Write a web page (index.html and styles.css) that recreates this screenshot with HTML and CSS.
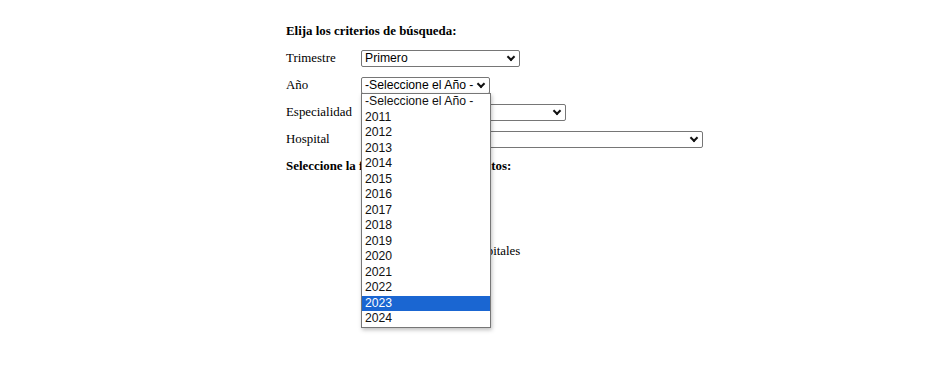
FILE: index.html
```html
<!DOCTYPE html>
<html lang="es">
<head>
  <meta charset="UTF-8" />
  <title>Consulta de datos</title>
  <link rel="stylesheet" href="styles.css">
</head>
<body>

  <div class="contenido">
    <form class="criterios">
      <div class="fila titulo">Elija los criterios de búsqueda:</div>

      <div class="fila">
        <label class="etiqueta">Trimestre</label>
        <span class="selector">
          <select class="sel-trimestre">
            <option>Primero</option>
          </select>
        </span>
      </div>

      <div class="fila">
        <label class="etiqueta">Año</label>
        <span class="selector">
          <select class="sel-anio">
            <option>-Seleccione el Año -</option>
          </select>
        </span>
      </div>

      <div class="fila">
        <label class="etiqueta">Especialidad</label>
        <span class="selector">
          <select class="sel-especialidad">
            <option></option>
          </select>
        </span>
      </div>

      <div class="fila">
        <label class="etiqueta">Hospital</label>
        <span class="selector">
          <select class="sel-hospital">
            <option></option>
          </select>
        </span>
      </div>

      <div class="fila titulo">Seleccione la forma de mostrar los datos:</div>

      <div class="opciones">
        <label class="opcion"><input type="radio" name="forma" checked /> Por Trimestre</label>
        <label class="opcion"><input type="radio" name="forma" /> Por Especialidad</label>
        <label class="opcion"><input type="radio" name="forma" /> Por Hospital</label>
        <label class="opcion"><input type="radio" name="forma" /> Comparativo de Hospitales</label>
      </div>
    </form>

    <!-- Lista desplegada del select de año -->
    <ul class="desplegable">
      <li>-Seleccione el Año -</li>
      <li>2011</li>
      <li>2012</li>
      <li>2013</li>
      <li>2014</li>
      <li>2015</li>
      <li>2016</li>
      <li>2017</li>
      <li>2018</li>
      <li>2019</li>
      <li>2020</li>
      <li>2021</li>
      <li>2022</li>
      <li class="activo">2023</li>
      <li>2024</li>
    </ul>
  </div>

</body>
</html>
```

FILE: styles.css
```css
html, body {
  height: 100%;
}

body {
  margin: 0;
  background: #fff;
  font-family: "Liberation Serif", "Times New Roman", serif;
  font-size: 12.9px;
  color: #000;
}

.contenido {
  position: relative;
  min-height: 100%;
  box-sizing: border-box;
  padding: 18px 0 0 286px;
}

.fila {
  height: 27px;
  display: flex;
  align-items: center;
}

.titulo {
  font-weight: bold;
}

.etiqueta {
  width: 75px;
}

.selector {
  position: relative;
  display: flex;
}

/* flecha del select */
.selector::after {
  content: "";
  position: absolute;
  right: 6px;
  top: 4px;
  width: 4px;
  height: 4px;
  border-right: 2px solid #111;
  border-bottom: 2px solid #111;
  transform: rotate(45deg);
  pointer-events: none;
}

select {
  -webkit-appearance: none;
  appearance: none;
  box-sizing: border-box;
  font-family: "Liberation Sans", Arial, sans-serif;
  font-size: 12.2px;
  height: 17px;
  padding: 0 0 0 3px;
  border: 1px solid #767676;
  border-radius: 2px;
  background: #fff;
  color: #000;
  line-height: 15px;
}

.sel-trimestre { width: 159px; }
.sel-anio { width: 129px; }
.sel-especialidad { width: 205px; }
.sel-hospital { width: 342px; }

.opciones {
  display: flex;
  flex-direction: column;
  padding: 1px 0 0 75px;
}

.opcion {
  height: 20px;
  display: flex;
  align-items: center;
}

.opcion input {
  margin: 0 6px 0 0;
}

.desplegable {
  position: absolute;
  left: 361px;
  top: 93px;
  width: 128px;
  margin: 0;
  padding: 0;
  list-style: none;
  background: #fff;
  border: 1px solid #767676;
  box-shadow: 1px 2px 4px rgba(0, 0, 0, 0.25);
  font-family: "Liberation Sans", Arial, sans-serif;
  font-size: 12.2px;
}

.desplegable li {
  height: 15.5px;
  line-height: 15.5px;
  padding-left: 3px;
  color: #111;
}

.desplegable li.activo {
  background: #1a66d2;
  color: #fff;
}
```
